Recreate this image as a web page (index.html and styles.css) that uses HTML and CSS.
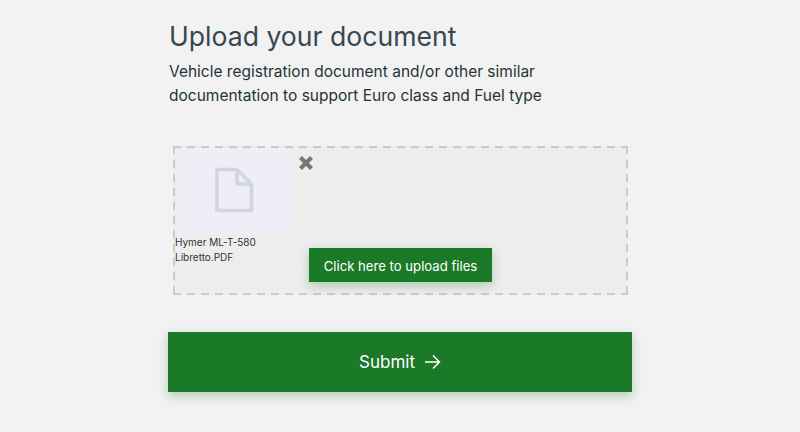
FILE: index.html
```html
<!DOCTYPE html>
<html lang="en">
<head>
  <meta charset="UTF-8">
  <title>Upload your document</title>
  <link rel="stylesheet" href="styles.css">
</head>
<body>
  <div class="form">
    <h1>Upload your document</h1>
    <p class="intro">Vehicle registration document and/or other similar<br>documentation to support Euro class and Fuel type</p>

    <!-- Dropzone -->
    <div class="dropzone">
      <div class="file">
        <div class="thumb">
          <svg width="40" height="46" viewBox="0 0 40 46" fill="none" stroke="#d2d4de" stroke-width="3.5" stroke-linejoin="round">
            <path d="M3 2.500h20l14.500 14.500v26.500h-34.500z"/>
            <path d="M23 2.500v14.500h14.500"/>
          </svg>
        </div>
        <div class="file-name">Hymer ML-T-580 Libretto.PDF</div>
      </div>
      <svg class="remove" width="16" height="16" viewBox="0 0 16 16" fill="none" stroke="#757575" stroke-width="4.200">
        <path d="M2.500 2.500l11 11M13.500 2.500l-11 11"/>
      </svg>
      <button class="upload-btn">Click here to upload files</button>
    </div>

    <button class="submit-btn">
      Submit
      <svg width="17" height="16" viewBox="0 0 17 16" fill="none" stroke="#fff" stroke-width="1.500">
        <path d="M1 8h14.500M9 1.500l6.500 6.500-6.500 6.500"/>
      </svg>
    </button>
  </div>
</body>
</html>
```

FILE: styles.css
```css
body {
  margin: 0;
  height: 432px;
  overflow: hidden;
  background: #f2f2f2;
  font-family: 'Inter', 'Roboto', sans-serif;
}

.form {
  width: 464px;
  margin: 0 auto;
  padding-top: 20px;
}

h1 {
  margin: 0 0 0 1px;
  font-size: 26.6px;
  line-height: 32px;
  font-weight: 400;
  color: #37474f;
}

.intro {
  margin: 8px 0 0 1px;
  font-size: 15.5px;
  line-height: 24px;
  color: #263238;
}

/* Dropzone, dashes drawn as gradients for the long dash length */
.dropzone {
  position: relative;
  box-sizing: border-box;
  width: 455px;
  height: 149px;
  margin: 38px 0 0 5px;
  padding: 2px 0 0 2px;
  background:
    linear-gradient(90deg, #cbcbcb 8px, transparent 8px) 0 0 / 14px 2px repeat-x,
    linear-gradient(90deg, #cbcbcb 8px, transparent 8px) 0 100% / 14px 2px repeat-x,
    linear-gradient(#cbcbcb 8px, transparent 8px) 0 0 / 2px 14px repeat-y,
    linear-gradient(#cbcbcb 8px, transparent 8px) 100% 0 / 2px 14px repeat-y,
    #ededed;
  display: flex;
}

.file {
  width: 118px;
}

.thumb {
  height: 87px;
  margin-left: 3px;
  background: #edeef6;
  display: flex;
  align-items: center;
  justify-content: center;
}

.thumb svg {
  margin: -3px 3px 0 0;
}

.file-name {
  font-size: 10px;
  line-height: 15px;
  color: #333;
}

.remove {
  position: absolute;
  left: 125px;
  top: 9px;
}

.upload-btn {
  position: absolute;
  left: 136px;
  top: 102px;
  width: 183px;
  height: 34px;
  padding: 1px 0 0;
  border: none;
  background: #1b7a28;
  color: #fff;
  font: 400 13.15px 'Inter', 'Roboto', sans-serif;
  box-shadow: 0 4px 10px rgba(27, 122, 40, 0.3);
}

.submit-btn {
  width: 464px;
  height: 60px;
  margin-top: 37px;
  padding: 0;
  border: none;
  background: #1b7a28;
  color: #fff;
  font: 400 17px 'Inter', 'Roboto', sans-serif;
  box-shadow: 0 4px 10px rgba(27, 122, 40, 0.3);
  display: flex;
  align-items: center;
  justify-content: center;
  gap: 9px;
}
```
